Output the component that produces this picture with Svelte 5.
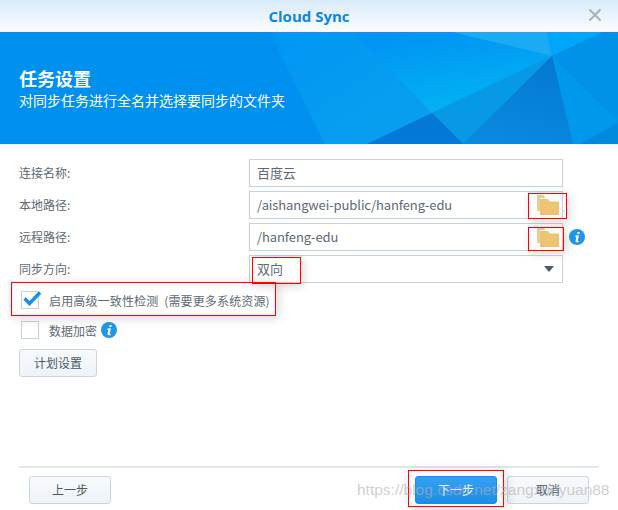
<script lang="ts">
	const fields = [
		{ label: '连接名称:', value: '百度云' },
		{ label: '本地路径:', value: '/aishangwei-public/hanfeng-edu', folder: true },
		{ label: '远程路径:', value: '/hanfeng-edu', folder: true, info: true }
	];
</script>

{#snippet infoIcon()}
	<svg class="info" width="16" height="16" viewBox="0 0 16 16">
		<circle cx="8" cy="8" r="8" fill="#2196e8" />
		<path d="M8.6 2.9h2.1l-.4 2H8.2zM7.7 6.3h2.2L8.8 11.6c-.1.5.3.6 1 .4l-.1 1c-1.800.6-3.400.4-3.100-1.100l.7-3.900c-.5 0-.8 0-1 .1l.2-1.300c.4-.3 1-.5 1.200-.5z" fill="#fff" />
	</svg>
{/snippet}

{#snippet folderIcon()}
	<svg class="folder" width="22" height="20" viewBox="0 0 22 20">
		<path d="M0 0h6l2 2v1H3v13H0z" fill="#ebcd96" />
		<path d="M3 3h8l2.500 2.500H22V20H3z" fill="#fff" />
		<path d="M3 4h7.500l2.500 2.500h9V20H3z" fill="#edc471" />
	</svg>
{/snippet}

<div class="dialog">
	<header class="titlebar">
		<span class="title">Cloud Sync</span>
		<svg class="close" width="14" height="14" viewBox="0 0 14 14">
			<path d="M1.500 1.500l11 11M12.500 1.500l-11 11" stroke="#a9aeb3" stroke-width="1.800" fill="none" />
		</svg>
	</header>

	<section class="banner">
		<svg class="facets" width="618" height="112" viewBox="0 0 618 112">
			<defs>
				<linearGradient id="glow" x1="0.2" y1="0" x2="0.55" y2="1">
					<stop offset="0" stop-color="#0092f4" />
					<stop offset="1" stop-color="#02b4f3" />
				</linearGradient>
				<linearGradient id="side" x1="0" y1="0" x2="1" y2="1">
					<stop offset="0" stop-color="#0096f4" />
					<stop offset="1" stop-color="#0aa0ee" />
				</linearGradient>
				<linearGradient id="deep" x1="0.7" y1="0" x2="0.3" y2="1">
					<stop offset="0" stop-color="#0479d2" />
					<stop offset="1" stop-color="#0a8adf" />
				</linearGradient>
			</defs>
			<polygon points="270,0 353,0 432,81 367,112 325,112" fill="url(#side)" />
			<polygon points="353,0 452,0 552,24 432,81" fill="url(#glow)" />
			<polygon points="452,0 547,0 552,24" fill="#1cabf2" />
			<polygon points="547,0 603,0 552,24" fill="#00a6fa" />
			<polygon points="603,0 618,0 618,90 552,24" fill="#0091e8" />
			<polygon points="552,24 618,90 580,112 573,112" fill="#0098ec" />
			<polygon points="618,92 618,112 580,112" fill="#0088dc" />
			<polygon points="552,24 432,81 463,112" fill="#0899e6" />
			<polygon points="552,24 463,112 573,112" fill="url(#deep)" />
			<polygon points="432,81 463,112 367,112" fill="#0478d6" />
		</svg>
		<h1>任务设置</h1>
		<p>对同步任务进行全名并选择要同步的文件夹</p>
	</section>

	<main class="form">
		{#each fields as f}
			<div class="row">
				<span class="label">{f.label}</span>
				<div class="input">
					<span>{f.value}</span>
					{#if f.folder}{@render folderIcon()}{/if}
				</div>
				{#if f.info}{@render infoIcon()}{/if}
			</div>
		{/each}
		<div class="row">
			<span class="label">同步方向:</span>
			<div class="input">
				<span>双向</span>
				<i class="caret"></i>
			</div>
		</div>

		<label class="check first">
			<span class="box">
				<svg width="20" height="18" viewBox="0 0 20 18">
					<path d="M2.500 8.500l5 5L18 2.500" stroke="#1491ea" stroke-width="3.400" fill="none" />
				</svg>
			</span>
			<span class="wide">启用高级一致性检测 (需要更多系统资源)</span>
		</label>
		<label class="check">
			<span class="box"></span>
			<span>数据加密</span>
			{@render infoIcon()}
		</label>

		<button class="btn plan">计划设置</button>
	</main>

	<footer class="footer">
		<button class="btn">上一步</button>
		<div class="right">
			<button class="btn primary">下一步</button>
			<button class="btn">取消</button>
		</div>
	</footer>

	<!-- red annotation boxes drawn over the screenshot -->
	<i class="mark" style="left:252px;top:257px;width:49px;height:27px"></i>
	<i class="mark" style="left:528px;top:193px;width:39px;height:26px"></i>
	<i class="mark" style="left:528px;top:227px;width:36px;height:24px"></i>
	<i class="mark" style="left:11px;top:282px;width:265px;height:34px"></i>
	<i class="mark" style="left:408px;top:470px;width:96px;height:37px"></i>

	<span class="watermark">https://blog.csdn.net/zangxueyuan88</span>
</div>

<style>
	:global(body) {
		background: #fff;
	}
	.dialog {
		position: relative;
		width: 618px;
		height: 510px;
		overflow: hidden;
		background: #fff;
		font-family: 'Noto Sans CJK SC', 'Noto Sans', sans-serif;
		font-size: 12px;
		color: #5e6974;
	}
	.titlebar {
		position: relative;
		height: 32px;
		display: flex;
		align-items: center;
		justify-content: center;
		background: linear-gradient(#d8ebfa, #fcfdff);
	}
	.title {
		font-family: 'Open Sans', 'Noto Sans', sans-serif;
		font-size: 15px;
		font-weight: 700;
		color: #0f86de;
	}
	.close {
		position: absolute;
		right: 16px;
		top: 8px;
	}
	.banner {
		position: relative;
		height: 112px;
		box-sizing: border-box;
		padding: 35px 19px 0;
		background: #0090f0;
		color: #fff;
	}
	.facets {
		position: absolute;
		left: 0;
		top: 0;
	}
	.banner h1,
	.banner p {
		position: relative;
		margin: 0;
	}
	.banner h1 {
		font-size: 18px;
		font-weight: 700;
		line-height: 22px;
	}
	.banner p {
		margin-top: 2px;
		font-size: 14px;
		line-height: 19px;
	}
	.form {
		padding: 15px 19px 0;
		height: 322px;
		box-sizing: border-box;
	}
	.row {
		display: flex;
		align-items: center;
		height: 28px;
		margin-bottom: 4px;
	}
	.label {
		width: 230px;
		padding-bottom: 2px;
	}
	.input {
		box-sizing: border-box;
		width: 314px;
		height: 28px;
		display: flex;
		align-items: center;
		justify-content: space-between;
		padding: 0 3px 0 7px;
		border: 1px solid #c8d2dd;
		font-size: 13px;
		letter-spacing: -0.1px;
	}
	.input span {
		padding-bottom: 2px;
	}
	.folder {
		flex: none;
	}
	.info {
		margin-left: 6px;
		flex: none;
	}
	.caret {
		margin-right: 5px;
		border: 5px solid transparent;
		border-top: 6px solid #4c5a67;
		border-bottom: 0;
	}
	.check {
		display: flex;
		align-items: center;
		height: 18px;
		margin-left: 2px;
		margin-top: 12px;
	}
	.check.first {
		margin-top: 8px;
	}
	.wide {
		word-spacing: 3px;
		letter-spacing: 0.15px;
	}
	.box {
		box-sizing: border-box;
		width: 18px;
		height: 18px;
		margin-right: 10px;
		border: 1px solid #c8d2dd;
		flex: none;
		position: relative;
	}
	.box svg {
		position: absolute;
		left: 0;
		top: -2px;
	}
	.check .info {
		margin-left: 4px;
	}
	.btn {
		box-sizing: border-box;
		width: 82px;
		height: 28px;
		padding: 0 0 2px;
		border: 1px solid #c8d5e2;
		border-radius: 3px;
		background: linear-gradient(#f8fafc, #eef3f8);
		font: inherit;
		color: #4c5a67;
	}
	.plan {
		display: block;
		width: 78px;
		margin-top: 10px;
	}
	.primary {
		border-color: #1c8fe0;
		background: linear-gradient(#33a1f5, #1e8de6);
		color: #fff;
	}
	.footer {
		margin: 0 19px;
		padding: 8px 10px 0;
		border-top: 2px solid #e4e6e8;
		display: flex;
		justify-content: space-between;
	}
	.right {
		display: flex;
		gap: 10px;
	}
	.mark {
		position: absolute;
		box-sizing: border-box;
		border: 1px solid #f00;
		box-shadow: 2px 2px 10px rgba(0, 0, 0, 0.17), inset 0 0 7px rgba(0, 0, 0, 0.06);
	}
	.watermark {
		position: absolute;
		left: 357px;
		top: 481px;
		font-family: 'Liberation Sans', sans-serif;
		font-size: 15.500px;
		color: rgba(175, 175, 175, 0.62);
		white-space: nowrap;
	}
</style>
